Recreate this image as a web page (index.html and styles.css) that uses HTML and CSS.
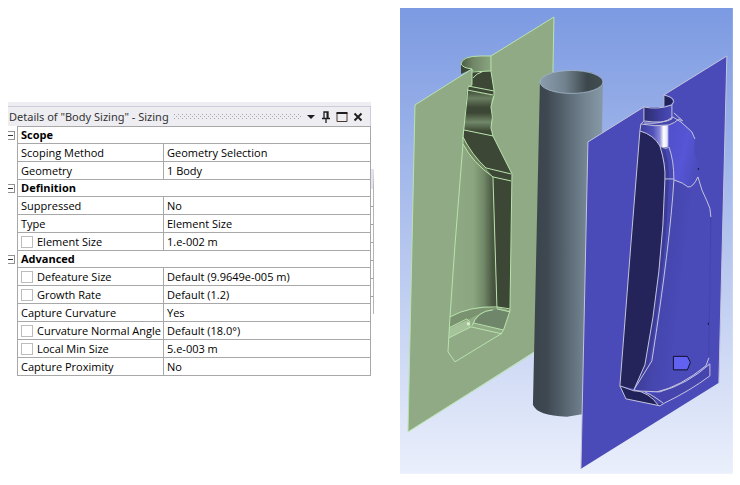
FILE: index.html
```html
<!DOCTYPE html>
<html lang="en">
<head>
    <meta charset="UTF-8">
    <meta name="viewport" content="width=device-width, initial-scale=1.0">
    <title>Body Sizing</title>
    <link rel="stylesheet" href="styles.css">
</head>
<body>
    <main class="workspace">

        <!-- Details panel -->
        <section class="details">
            <div class="panel">
                <header class="panel-title">
                    <h1>Details of "Body Sizing" - Sizing</h1>
                    <span class="grip"></span>
                    <button class="tool" type="button" aria-label="Menu">
                        <svg width="10" height="12" viewBox="0 0 10 12"><path d="M1 4h8L5 8z" fill="#1e1e1e"/></svg>
                    </button>
                    <button class="tool" type="button" aria-label="Pin">
                        <svg width="10" height="12" viewBox="0 0 10 12"><path d="M3 7V1h4v6M1 7.500h8M5 8v4" fill="none" stroke="#1e1e1e" stroke-width="1.300"/><path d="M5.500 1H7v6H5.500z" fill="#1e1e1e"/></svg>
                    </button>
                    <button class="tool" type="button" aria-label="Maximize">
                        <svg width="12" height="12" viewBox="0 0 12 12"><path d="M1 2v8.500h10V2" fill="none" stroke="#4a3a2c"/><path d="M0.500 2h11" stroke="#1e1e1e" stroke-width="2"/></svg>
                    </button>
                    <button class="tool" type="button" aria-label="Close">
                        <svg width="10" height="12" viewBox="0 0 10 12"><path d="M1.500 2.500l7 7M8.500 2.500l-7 7" stroke="#1e1e1e" stroke-width="1.900"/></svg>
                    </button>
                </header>

                <table class="props">
                    <colgroup>
                        <col class="col-gutter">
                        <col class="col-name">
                        <col>
                    </colgroup>
                    <tbody>
                        <tr class="group">
                            <td class="gutter"><button class="toggle" type="button" aria-label="Collapse Scope"></button></td>
                            <th colspan="2">Scope</th>
                        </tr>
                        <tr><td class="gutter"></td><td class="name">Scoping Method</td><td class="value">Geometry Selection</td></tr>
                        <tr><td class="gutter"></td><td class="name">Geometry</td><td class="value">1 Body</td></tr>
                    </tbody>
                    <tbody>
                        <tr class="group">
                            <td class="gutter"><button class="toggle" type="button" aria-label="Collapse Definition"></button></td>
                            <th colspan="2">Definition</th>
                        </tr>
                        <tr><td class="gutter"></td><td class="name">Suppressed</td><td class="value">No</td></tr>
                        <tr><td class="gutter"></td><td class="name">Type</td><td class="value">Element Size</td></tr>
                        <tr><td class="gutter"></td><td class="name"><label><input type="checkbox">Element Size</label></td><td class="value">1.e-002 m</td></tr>
                    </tbody>
                    <tbody>
                        <tr class="group">
                            <td class="gutter"><button class="toggle" type="button" aria-label="Collapse Advanced"></button></td>
                            <th colspan="2">Advanced</th>
                        </tr>
                        <tr><td class="gutter"></td><td class="name"><label><input type="checkbox">Defeature Size</label></td><td class="value">Default (9.9649e-005 m)</td></tr>
                        <tr><td class="gutter"></td><td class="name"><label><input type="checkbox">Growth Rate</label></td><td class="value">Default (1.2)</td></tr>
                        <tr><td class="gutter"></td><td class="name">Capture Curvature</td><td class="value">Yes</td></tr>
                        <tr><td class="gutter"></td><td class="name"><label><input type="checkbox">Curvature Normal Angle</label></td><td class="value">Default (18.0°)</td></tr>
                        <tr><td class="gutter"></td><td class="name"><label><input type="checkbox">Local Min Size</label></td><td class="value">5.e-003 m</td></tr>
                        <tr><td class="gutter"></td><td class="name">Capture Proximity</td><td class="value">No</td></tr>
                    </tbody>
                </table>
            </div>
            <div class="panel-edge"></div>
        </section>

        <!-- Model view -->
        <svg class="viewport" viewBox="400 8 333 466" role="img" aria-label="Bottle mold halves and parison">
            <defs>
                <linearGradient id="sky" x1="0" y1="0" x2="0" y2="1">
                    <stop offset="0" stop-color="#7c9ae2"/>
                    <stop offset="0.5" stop-color="#b3c4ee"/>
                    <stop offset="1" stop-color="#eaeffb"/>
                </linearGradient>
                <linearGradient id="tube">
                    <stop offset="0" stop-color="#3b444c"/>
                    <stop offset="0.2" stop-color="#3e4851"/>
                    <stop offset="0.45" stop-color="#56646f"/>
                    <stop offset="0.75" stop-color="#748591"/>
                    <stop offset="1" stop-color="#8799a7"/>
                </linearGradient>
                <linearGradient id="tubeInside">
                    <stop offset="0" stop-color="#8b9dae"/>
                    <stop offset="0.4" stop-color="#71828e"/>
                    <stop offset="0.75" stop-color="#3c474c"/>
                    <stop offset="1" stop-color="#424d52"/>
                </linearGradient>
                <linearGradient id="neckGreen">
                    <stop offset="0" stop-color="#4c5b43"/>
                    <stop offset="0.4" stop-color="#708667"/>
                    <stop offset="1" stop-color="#8ba580"/>
                </linearGradient>
                <linearGradient id="ribs" x1="0" y1="0" x2="0" y2="1">
                    <stop offset="0" stop-color="#3d4735"/>
                    <stop offset="0.18" stop-color="#6a7f61"/>
                    <stop offset="0.38" stop-color="#3d4735"/>
                    <stop offset="0.5" stop-color="#3d4735"/>
                    <stop offset="0.7" stop-color="#718868"/>
                    <stop offset="0.9" stop-color="#3d4735"/>
                </linearGradient>
                <linearGradient id="cavity">
                    <stop offset="0" stop-color="#8faa84"/>
                    <stop offset="0.5" stop-color="#8ba580"/>
                    <stop offset="0.72" stop-color="#718868"/>
                    <stop offset="0.9" stop-color="#4b5942"/>
                    <stop offset="1" stop-color="#424e3a"/>
                </linearGradient>
                <linearGradient id="neckBlue">
                    <stop offset="0" stop-color="#2c2c70"/>
                    <stop offset="0.5" stop-color="#3c3c98"/>
                    <stop offset="1" stop-color="#4b4bbc"/>
                </linearGradient>
                <linearGradient id="shoulder">
                    <stop offset="0" stop-color="#3c3c98"/>
                    <stop offset="0.45" stop-color="#5151ba"/>
                    <stop offset="0.68" stop-color="#8888d8"/>
                    <stop offset="0.82" stop-color="#fff"/>
                    <stop offset="0.94" stop-color="#e4e4fa"/>
                    <stop offset="1" stop-color="#5b5bd0"/>
                </linearGradient>
                <linearGradient id="grip" x1="0" y1="0" x2="1" y2="0.6">
                    <stop offset="0" stop-color="#5050cb"/>
                    <stop offset="0.6" stop-color="#5656d6"/>
                    <stop offset="1" stop-color="#4c4cbe"/>
                </linearGradient>
                <linearGradient id="bodyBlue" gradientUnits="userSpaceOnUse" x1="645" y1="290" x2="680" y2="294">
                    <stop offset="0" stop-color="#3c3c98"/>
                    <stop offset="0.5" stop-color="#4646ae"/>
                    <stop offset="1" stop-color="#4a4ab8"/>
                </linearGradient>
            </defs>

            <rect x="400" y="8" width="333" height="466" fill="url(#sky)"/>

            <!-- Green mold half -->
            <path d="M461 64v10l11-5v-6z" fill="#3d4735"/>
            <path d="M415 105L472 69V60h19v-4L554 17L548 343L408 432z" fill="#8faa84"/>
            <path d="M461 64q0-8 20-8h10v16h-15l-4-3q-9-1-11-5z" fill="url(#neckGreen)"/>
            <path d="M472 71h19l3 19v6l-27-6 1-4 4-1z" fill="#3d4735"/>
            <path d="M467 90L493 96Q489 107 493 117Q491 122 491 128L493 136L464 130z" fill="url(#ribs)"/>
            <path d="M464 130L493 136L512 174V181L493 177L478 165Q468 154 463 143z" fill="#3d4735"/>
            <path d="M463 137Q472 155 486 168L493 177L478 165Q468 154 463 143z" fill="#70855f"/>
            <path d="M463 144Q473 163 493 177L497 308Q472 305 450 317L455 245z" fill="url(#cavity)"/>
            <path d="M493 177L512 181L510 310L497 307z" fill="#3d4735"/>
            <path d="M450 317Q472 306 497 308L483 312L468 320L449 328z" fill="#7a9270"/>
            <path d="M449 329L468 320L471 327L449 338z" fill="#a5c29a"/>
            <path d="M474 324Q478 311 497 309L510 312L503 330z" fill="#70866a"/>
            <g class="edges-green">
                <path d="M408 432L415 105L472 69V85L468 87L467 99L463 137V144L455 245L450 317L448 352L455 362L501 334Q504 331 505 326L510 311L512 174L493 136L491 128Q494 117 491 107L494 96V90L491 71V56L554 17L553 72"/>
                <path d="M408 432L534 353M472 69Q463 68 461 64Q462 56 481 56H491M472 72L491 71M473 78Q477 73 482 72"/>
                <path d="M468 86L494 91M467 90L493 95M464 130L493 136M463 137Q472 155 486 168L511 174M463 144Q473 163 493 177L511 181M493 177L497 308"/>
                <path d="M450 317Q470 306 497 307L510 309M497 309L510 312M449 328L467 319L470 322M449 338L471 327L502 334M473 323L503 330M472 326Q477 311 493 310"/>
            </g>
            <circle cx="468.500" cy="324" r="1.800" fill="#d6efcb"/>

            <!-- Parison -->
            <path d="M540 82L533 405Q537 416 567 417L597 412L603 82z" fill="url(#tube)"/>
            <ellipse cx="571.500" cy="82" rx="31.500" ry="11.500" fill="url(#tubeInside)" stroke="#a3b8ca" stroke-width="0.800"/>

            <!-- Blue mold half -->
            <path d="M588 142L644 107H664V95L727 56L719 383L581 469z" fill="#4a4ab8"/>
            <path d="M664 95Q674 99 673 102Q672 105 664 106z" fill="#22225a"/>
            <path d="M674 180Q672 250 652 361L634 390Q652 396 675 387Q705 372 709 359L711 216L698 177z" fill="url(#bodyBlue)"/>
            <path d="M644 107Q658 110 672 105V119Q664 124 644 121z" fill="url(#neckBlue)"/>
            <path d="M641 124L644 121Q664 124 673 117L679 120L669 126L641 126z" fill="#4545b0"/>
            <path d="M669 126L679 119L692 131L695 139L694 153L699 163L698 175Q696 187 690 187Q684 184 674 180Q674 160 669 148z" fill="url(#grip)"/>
            <path d="M641 124Q655 127 669 125V146Q666 150 660 146Q654 134 640 131z" fill="url(#shoulder)"/>
            <path d="M640 131Q655 136 660 146Q666 165 665 180Q663 270 645 365L634 389L620 386L631 244z" fill="#24245a"/>
            <path d="M660 146Q665 149 669 146Q675 164 674 180L668 240L653 358L636 388L645 365Q660 290 665 180Q664 160 660 146z" fill="#3b3b98"/>
            <path d="M669 147Q675 164 674 180L668 240L653 358L649 364Q666 270 669 180Q669 160 665 149z" fill="#4848b4"/>
            <path d="M620 386L634 391L650 394L662 406L626 399z" fill="#22225a"/>
            <path d="M640 392Q655 395 675 387Q700 373 709 362V366Q690 383 665 392L650 395z" fill="#5a5ae0"/>
            <path d="M650 394Q680 390 710 365V376L665 403L658 405z" fill="#4545ad"/>
            <g class="edges-blue">
                <path d="M581 469L588 142L644 107V121Q664 124 672 119V105Q658 110 644 107M672 105Q678 98 664 95L727 56L719 383M664 95V106"/>
                <path d="M644 121L641 124L640 131L631 244L620 386L626 399L660 406L665 403Q690 391 710 376V364Q688 384 660 392L634 391L620 386"/>
                <path d="M640 131Q654 135 660 146Q666 165 665 180Q663 270 645 365L634 390L652 361Q670 245 674 180Q674 160 669 147Q666 150 660 146M665 179H674"/>
                <path d="M641 124Q655 127 669 125Q675 123 679 119L682 121M644 123Q663 125 673 117L681 122L692 132L695 139M674 113L683 121"/>
                <path d="M674 180Q684 183 688 187Q693 188 698 177Q702 192 707 201Q711 208 711 217M709 358L706 366Q680 387 657 392M634 390Q650 393 658 405M645 392Q654 396 663 403"/>
            </g>
            <path d="M711 218L709 356" stroke="#4040a4" stroke-width="0.600"/>
            <path d="M708 323h1v2h-1zM698 168h1v2h-1z" fill="#16163c"/>
            <path d="M673.500 356.500h14l3 6-3 7.500h-14z" fill="#6262f2" stroke="#11112b"/>
        </svg>

    </main>
</body>
</html>
```

FILE: styles.css
```css
body {
    font-family: 'Open Sans', 'Noto Sans', sans-serif;
    font-size: 11px;
    color: #000;
    background-color: #fff;
    margin: 0;
}

.workspace {
    display: grid;
    grid-template-columns: 12fr 11fr;
    column-gap: 29px;
    align-items: start;
    padding: 8px 7px 8px 8px;
}

.viewport {
    display: block;
    width: 100%;
    height: auto;
}

.details {
    display: flex;
    margin: 94px -3px 0 0;
}

.panel {
    flex: 1;
    min-width: 0;
    border-top: 4px solid #eeeef2;
}

/* Sliver of the pane behind */
.panel-edge {
    width: 3px;
    margin: 67px 0 62px;
    box-sizing: border-box;
    border-right: 1px solid #b4b4b4;
    background: repeating-linear-gradient(#fff 0 17px, #a0a0a0 17px 18px);
    border-top: 20px solid #e4e4f0;
}

.panel-title {
    display: flex;
    align-items: center;
    height: 20px;
    box-sizing: border-box;
    padding: 0 7px 0 1px;
    gap: 5px;
    background-color: #eeeef2;
    border-top: 1px solid #ccccdb;
    border-right: 1px solid #ccccdb;
}

.panel-title h1 {
    margin: 0;
    font-family: 'Noto Sans', sans-serif;
    font-size: 11px;
    font-weight: 400;
    color: #333;
    white-space: nowrap;
}

.grip {
    flex: 1;
    height: 5px;
    background-image:
        linear-gradient(90deg, #a5a5a9 1px, transparent 1px),
        linear-gradient(90deg, #a5a5a9 1px, transparent 1px),
        linear-gradient(90deg, transparent 2px, #a5a5a9 2px, #a5a5a9 3px, transparent 3px);
    background-size: 4px 1px;
    background-position: 0 0, 0 4px, 0 2px;
    background-repeat: repeat-x;
}

.tool {
    display: flex;
    padding: 0;
    border: 0;
    background: none;
}

/* Property grid */
.props {
    width: 100%;
    table-layout: fixed;
    border-collapse: separate;
    border-spacing: 0;
    line-height: 16px;
}

.col-gutter {
    width: 9px;
}

.col-name {
    width: 146px;
}

.props td,
.props th {
    height: 17px;
    padding: 0 0 0 3px;
    border-bottom: 1px solid #a8a8a8;
    border-left: 1px solid #a8a8a8;
    text-align: left;
    white-space: nowrap;
}

.props .group td,
.props .group th {
    height: 16px;
    font-weight: 700;
}

.props tr:first-child th,
.props .value {
    border-right: 1px solid #a8a8a8;
}

.props tbody:first-of-type tr:first-child th {
    border-top: 1px solid #a8a8a8;
}

.props td.gutter {
    padding: 0;
    border: 0;
}

.toggle {
    display: block;
    width: 7px;
    height: 9px;
    padding: 0;
    border: 1px solid #919191;
    border-left: 0;
    background: linear-gradient(#333, #333) 0 3px / 5px 1px no-repeat;
}

.name label {
    display: flex;
    align-items: center;
    gap: 4px;
}

.name input {
    appearance: none;
    width: 12px;
    height: 12px;
    margin: 0;
    border: 1px solid #bcbcbc;
    background-color: #fff;
}

/* Model edges */
.edges-green path {
    fill: none;
    stroke: #b9e3ad;
    stroke-width: 1;
}

.edges-blue path {
    fill: none;
    stroke: #c4c4dc;
    stroke-width: 1;
}
```
